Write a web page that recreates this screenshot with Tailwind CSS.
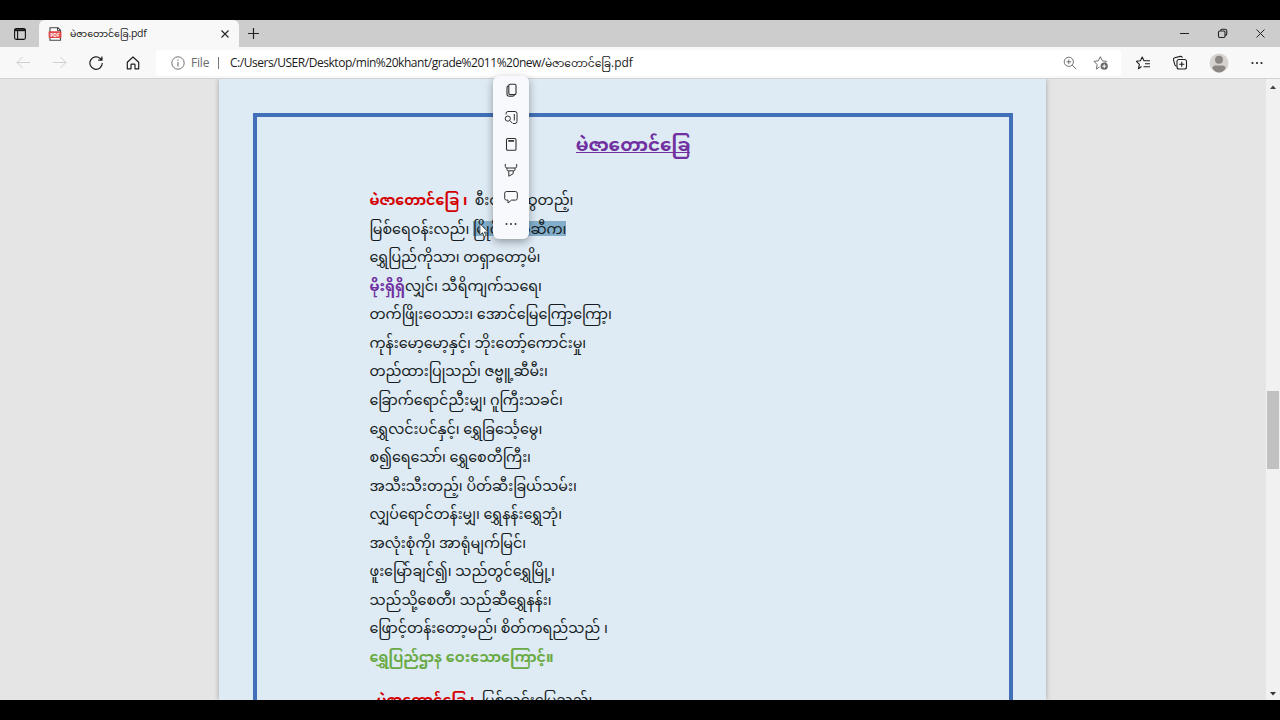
<!DOCTYPE html>
<html lang="my">
<head>
    <meta charset="UTF-8">
    <meta name="viewport" content="width=device-width, initial-scale=1.0">
    <title>မဲဇာတောင်ခြေ.pdf</title>
    <script src="https://cdn.jsdelivr.net/npm/@tailwindcss/browser@4"></script>
</head>
<body class="bg-black">
<div class="w-[1280px] h-[720px] py-5 overflow-hidden flex flex-col font-['Open_Sans','Noto_Sans_Myanmar','Pyidaungsu','Padauk',sans-serif] text-[#1b1b1b]">

    <!-- Tab strip -->
    <div class="h-[27px] shrink-0 bg-[#cdcdcd] flex items-stretch">
        <div class="w-[39px] flex items-center justify-center">
            <svg class="w-3.5 h-3.5" viewBox="0 0 14 14" fill="none" stroke="#111" stroke-width="1.1"><rect x="1.6" y="1.6" width="10.8" height="10.8" rx="1.6"/><path d="M1.6 3.2h10.8" stroke-width="1.9"/><path d="M4.6 4v8.4"/></svg>
        </div>
        <div class="w-[200px] bg-[#f8f8f8] rounded-t-md flex items-center pl-[9px] pr-[9px]">
            <svg class="w-3.5 h-3.5 mr-2 shrink-0" viewBox="0 0 14 14"><path d="M2 .8h8L12.5 3.300V13.200H2z" fill="#fff" stroke="#444" stroke-width="1.1"/><path d="M9.500 .5v3.200h3.200" fill="none" stroke="#444"/><rect x="0.600" y="4.300" width="12.800" height="6.800" rx=".8" fill="#e04848"/><text x="7" y="9.700" font-size="5" font-weight="700" text-anchor="middle" fill="#fff">PDF</text></svg>
            <span class="text-[10.5px] whitespace-nowrap grow tracking-[-0.3px]"><span class="text-[9.5px] tracking-[-0.05px]">မဲဇာတောင်ခြေ</span>.pdf</span>
            <svg class="w-2.5 h-2.5" viewBox="0 0 10 10" stroke="#222" stroke-width="1.1"><path d="M1.500 1.500l7 7M8.500 1.500l-7 7"/></svg>
        </div>
        <div class="w-[30px] flex items-center justify-center">
            <svg class="w-3 h-3" viewBox="0 0 12 12" stroke="#222" stroke-width="1.2"><path d="M5.500 0v11M0 5.500h11"/></svg>
        </div>
        <div class="ml-auto flex items-center text-[#222]">
            <svg class="w-[38px] h-3" viewBox="0 0 38 12" stroke="currentColor" stroke-width="1"><path d="M14 5.500h9"/></svg>
            <svg class="w-[38px] h-3" viewBox="0 0 38 12" fill="none" stroke="currentColor" stroke-width="1.100"><rect x="14.500" y="3" width="6.500" height="6.500" rx="1.200"/><path d="M16.500 2.700Q16.700 1.300 18 1.300h2.800q2 0 2 2v2.500q0 1.500-1.500 1.800"/></svg>
            <svg class="w-[38px] h-3" viewBox="0 0 38 12" stroke="currentColor" stroke-width="1"><path d="M14.500 1.500l8 8M22.500 1.500l-8 8"/></svg>
        </div>
    </div>

    <!-- Toolbar -->
    <div class="h-8 shrink-0 bg-[#f8f8f8] border-b border-[#d2d2d2] flex items-center">
        <div class="w-[156px] pl-4 flex items-center gap-[22.600px]">
            <svg class="w-3.5 h-3.5" viewBox="0 0 14 14" fill="none" stroke="#cfcfcf"><path d="M14 6.500H1M6.500 1L1 6.500 6.500 12"/></svg>
            <svg class="w-3.5 h-3.5" viewBox="0 0 14 14" fill="none" stroke="#cfcfcf"><path d="M0 6.500h13M7.500 1L13 6.500 7.500 12"/></svg>
            <svg class="w-3.5 h-3.5" viewBox="0 0 14 14" fill="none" stroke="#1f1f1f" stroke-width="1.200"><path d="M13.300 7A6.200 6.200 0 1 1 11.300 2.500L12.700 3.800M12.900 .4v3.700H9.200"/></svg>
            <svg class="w-3.5 h-3.5" viewBox="0 0 14 14" fill="none" stroke="#1f1f1f" stroke-width="1.200" stroke-linejoin="round"><path d="M1.300 6.300L7 1l5.700 5.300v6.500H9V9q0-.8-.8-.8H5.800Q5 8.200 5 9v3.800H1.300z"/></svg>
        </div>
        <div class="w-[965px] h-[26px] bg-white rounded-[3px] flex items-center pl-[15px] pr-3 text-xs tracking-[-0.460px]">
            <svg class="w-3.5 h-3.5 mr-1.5" viewBox="0 0 14 14" fill="none" stroke="#747474"><circle cx="7" cy="7" r="6.200"/><path d="M7 6v4.500M7 3.500v1.200" stroke-width="1.100"/></svg>
            <span class="text-[#6b6b6b] w-[27px] tracking-[-0.200px]">File</span>
            <span class="w-px h-3 bg-[#777] mr-[11px]"></span>
            <span class="whitespace-nowrap grow">C:/Users/USER/Desktop/min%20khant/grade%2011%20new/<span class="text-[10.700px] tracking-normal">မဲဇာတောင်ခြေ</span><span class="tracking-normal">.pdf</span></span>
            <svg class="w-3.5 h-3.5 mr-4" viewBox="0 0 14 14" fill="none" stroke="#707070"><circle cx="5.800" cy="5.800" r="4.600"/><path d="M9.200 9.200L13 13M5.800 3.500v4.600M3.500 5.800h4.600"/></svg>
            <svg class="w-4 h-4" viewBox="0 0 16 16" fill="none" stroke="#707070"><path d="M6.500 12L3.300 14.100l.9-4.600L.9 6.400l4.400-.6L7.300 1.700l2 4.100 4.300.6-1.200 1.300"/><circle cx="11.200" cy="11.200" r="3.600" fill="#666" stroke="none"/><path d="M11.200 9.200v4M9.200 11.200h4" stroke="#fff"/></svg>
        </div>
        <div class="flex items-center pl-[14px]">
            <svg class="w-4 h-4 mr-[21px]" viewBox="0 0 16 16" fill="none" stroke="#1f1f1f" stroke-width="1.100" stroke-linejoin="round"><path d="M6.500 11.500L3.400 13.700l1-4.400L1.400 6.300l4-.6L7.200 2 9 5.700h6M10 8.700h5M8.500 11.700H15"/></svg>
            <svg class="w-4 h-4 mr-[21px]" viewBox="0 0 16 16" fill="none" stroke="#1f1f1f" stroke-width="1.100"><path d="M4.500 11.300Q3.200 11 2.800 9.700L1.500 4.900Q1.100 3.200 2.600 2.800L8.300 1.400q1.600-.3 2.200 1.200"/><rect x="5" y="4.500" width="9.500" height="9.500" rx="2"/><path d="M9.750 6.700v5M7.250 9.200h5"/></svg>
            <svg class="w-5 h-5 mr-[22px]" viewBox="0 0 20 20"><circle cx="10" cy="10" r="9.500" fill="#d5d2d0"/><circle cx="10" cy="6.800" r="4" fill="#8b8785"/><path d="M3.500 15.500Q3.500 12.500 6.500 12.500h7q3 0 3 3Q14 19.400 10 19.400T3.500 15.500z" fill="#8b8785"/></svg>
            <svg class="w-3 h-3" viewBox="0 0 12 12" fill="#222"><circle cx="1.500" cy="6" r="1.100"/><circle cx="6" cy="6" r="1.100"/><circle cx="10.500" cy="6" r="1.100"/></svg>
        </div>
    </div>

    <!-- PDF viewer -->
    <div class="relative grow min-h-0 flex bg-[#e5e5e5]">
        <div class="w-[827px] ml-[219px] bg-[#deeaf4] shadow-[0_0_5px_rgba(0,0,0,0.3)] pl-[34px] pr-[33px] pt-[34px] overflow-hidden [clip-path:inset(0_-8px)]">
            <div class="w-[760px] h-[700px] border-4 border-[#4270b8]">
                <h1 class="mt-[12px] text-center text-[18.300px] leading-[30px] font-bold text-[#7030a0]"><span class="bg-[linear-gradient(#7030a0,#7030a0)] bg-[length:100%_1px] bg-[position:0_88%] bg-no-repeat">မဲဇာတောင်ခြေ</span></h1>
                <div class="mt-[27.200px] ml-[112.500px] flex flex-col items-start text-[14.300px] leading-[28.550px] whitespace-pre text-[#151c22]">
                    <div><b class="text-[#d40000]">မဲဇာတောင်ခြေ ၊</b>  စီးတသွဆွတည့်၊</div>
                    <div>မြစ်ရေဝန်းလည်၊ <span class="bg-[linear-gradient(#83aecb,#83aecb)] bg-[length:100%_15px] bg-center bg-no-repeat">မြိုင်တောဆီက၊</span></div>
                    <div>ရွှေပြည်ကိုသာ၊ တရှာတော့မိ၊</div>
                    <div><b class="text-[#7030a0]">မိုးရှိရှိ</b>လျှင်၊ သီရိကျက်သရေ၊</div>
                    <div>တက်ဖြိုးဝေသား၊ အောင်မြေကြော့ကြော့၊</div>
                    <div>ကုန်းမော့မော့နှင့်၊ ဘိုးတော့်ကောင်းမှု၊</div>
                    <div class="tracking-[-0.080px]">တည်ထားပြုသည်၊ ဇဗ္ဗူ့ဆီမီး၊</div>
                    <div>ခြောက်ရောင်ညီးမျှ၊ ဂူကြီးသခင်၊</div>
                    <div>ရွှေလင်းပင်နှင့်၊ ရွှေခြင်္သေ့မွေ၊</div>
                    <div>စ၍ရေသော်၊ ရွှေစေတီကြီး၊</div>
                    <div>အသီးသီးတည့်၊ ပိတ်ဆီးခြယ်သမ်း၊</div>
                    <div>လျှပ်ရောင်တန်းမျှ၊ ရွှေနန်းရွှေဘုံ၊</div>
                    <div>အလုံးစုံကို၊ အာရုံမျက်မြင်၊</div>
                    <div>ဖူးမြော်ချင်၍၊ သည်တွင်ရွှေမြို့၊</div>
                    <div>သည်သို့စေတီ၊ သည်ဆီရွှေနန်း၊</div>
                    <div>ဖြောင့်တန်းတော့မည်၊ စိတ်ကရည်သည် ၊</div>
                    <div class="font-bold text-[#6aaa45]">ရွှေပြည်ဌာန ဝေးသောကြောင့်။</div>
                    <div class="mt-[15px] ml-[7px]"><b class="text-[#d40000]">မဲဇာတောင်ခြေ ၊</b>  မြစ်သင်းမြေသည်၊</div>
                </div>
            </div>
        </div>

        <!-- Scrollbar -->
        <div class="ml-auto w-3.5 bg-[#f1f1f1] flex flex-col items-center py-1">
            <svg class="w-1.5 h-2" viewBox="0 0 6 8"><path d="M0 6l3-3.500L6 6z" fill="#444"/></svg>
            <div class="mt-[300px] w-3 h-[78px] bg-[#c1c1c1]"></div>
            <svg class="w-1.5 h-2 mt-auto" viewBox="0 0 6 8"><path d="M0 4l3 3.500L6 4z" fill="#333"/></svg>
        </div>

        <!-- Selection menu -->
        <div class="absolute left-[493px] -top-[3px] w-9 h-[163px] bg-[#f7f9fc] rounded-md shadow-[0_3px_8px_rgba(0,0,0,0.35)] pt-[7px] flex flex-col items-center gap-[12.800px] text-[#303030]">
            <svg class="w-3.5 h-3.5" viewBox="0 0 14 14" fill="none" stroke="currentColor" stroke-width="1.100"><rect x="4.800" y="1.300" width="7.200" height="10.300" rx="1.300"/><path d="M4.500 2.700Q3 3 3 4.400v6.600q0 2.200 2.200 2.200h3.500q1.300 0 1.700-1.300"/></svg>
            <svg class="w-3.5 h-3.5" viewBox="0 0 14 14" fill="none" stroke="currentColor"><path d="M2 4.500V3.500q0-2 2-2h7q2 0 2 2v8q0 2-2 2H9M10.300 4v6.500"/><circle cx="3.800" cy="8.600" r="2.600"/><path d="M5.800 10.600l2.700 2.700"/></svg>
            <svg class="w-3.5 h-3.5" viewBox="0 0 14 14" fill="none" stroke="currentColor" stroke-width="1.100"><rect x="2.500" y="1.500" width="9.500" height="11.700" rx="1.300"/><path d="M4.300 3.900h5.800" stroke-width="1.700"/></svg>
            <svg class="w-3.5 h-3.5" viewBox="0 0 14 14" fill="none" stroke="currentColor" stroke-linejoin="round"><path d="M1.300 1v2.400q0 1.600 1.600 1.600h8.200q1.600 0 1.600-1.600V1M3 5v1.800q0 1 1.200 1h5.600q1.200 0 1.200-1V5M4.800 8v5.200l4.400-2.500V8"/></svg>
            <svg class="w-3.5 h-3.5" viewBox="0 0 14 14" fill="none" stroke="currentColor" stroke-linejoin="round"><path d="M2.500 1.500h9q1.800 0 1.800 1.700v5.200q0 1.700-1.800 1.700H7.500L4 13v-2.900H2.500Q.7 10.100.7 8.400V3.200q0-1.700 1.800-1.700z"/></svg>
            <svg class="w-3.5 h-3.5" viewBox="0 0 14 14" fill="currentColor"><circle cx="2.500" cy="7" r="1"/><circle cx="7" cy="7" r="1"/><circle cx="11.500" cy="7" r="1"/></svg>
        </div>

        <!-- Mouse pointer -->
        <svg class="absolute left-[479px] top-[144px] w-[10px] h-[15px]" viewBox="0 0 10 15"><path d="M1 1v11l2.600-2.400 1.700 4 1.700-.8-1.700-3.800H9z" fill="#fff" stroke="#444" stroke-width=".7"/></svg>
    </div>
</div>
</body>
</html>
